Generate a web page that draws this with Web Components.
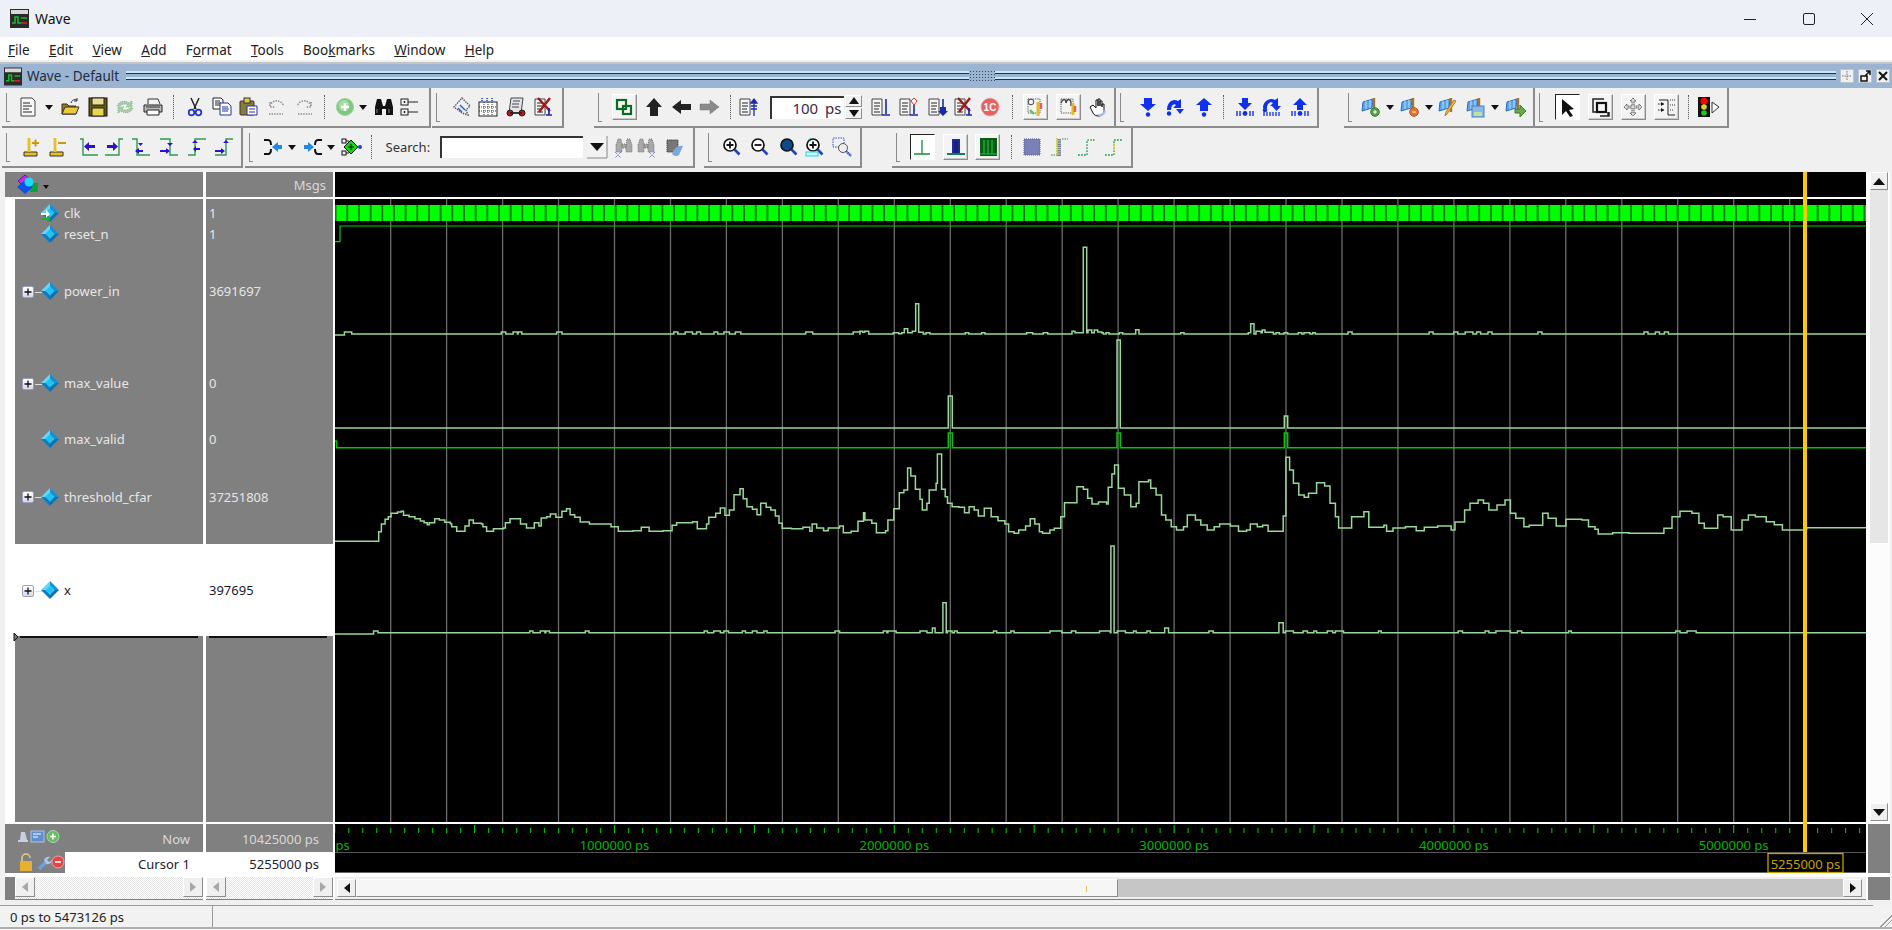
<!DOCTYPE html>
<html>
<head>
<meta charset="utf-8">
<title>Wave</title>
<style>
  html, body { margin: 0; height: 100%; overflow: hidden; background: #f0f0f0; }
  body { font: 13px "Noto Sans", "Liberation Sans", sans-serif; color: #111; }
</style>
</head>
<body>
<wave-app></wave-app>

<template id="app-tpl">
  <style>
    :host { display: block; width: 1892px; height: 930px; overflow: hidden; background: #f0f0f0; }
  </style>
  <title-bar></title-bar>
  <menu-bar>
    <menu-item><u>F</u>ile</menu-item>
    <menu-item><u>E</u>dit</menu-item>
    <menu-item><u>V</u>iew</menu-item>
    <menu-item><u>A</u>dd</menu-item>
    <menu-item>F<u>o</u>rmat</menu-item>
    <menu-item><u>T</u>ools</menu-item>
    <menu-item>Boo<u>k</u>marks</menu-item>
    <menu-item><u>W</u>indow</menu-item>
    <menu-item><u>H</u>elp</menu-item>
  </menu-bar>
  <dock-title></dock-title>
  <tool-strip>
    <tool-group left="2" right="431">
      <tool-icon name="doc" at="29"></tool-icon><tool-icon name="drop" at="49" w="8"></tool-icon>
      <tool-icon name="open" at="69.5"></tool-icon><tool-icon name="save" at="97.5"></tool-icon>
      <tool-icon name="reload" at="125"></tool-icon><tool-icon name="print" at="152.5"></tool-icon>
      <tool-sep at="173.5"></tool-sep><tool-icon name="cut" at="194.5"></tool-icon>
      <tool-icon name="copy" at="222"></tool-icon><tool-icon name="paste" at="249"></tool-icon>
      <tool-icon name="undo" at="277"></tool-icon><tool-icon name="redo" at="304"></tool-icon>
      <tool-sep at="324.5"></tool-sep><tool-icon name="plus" at="344.5"></tool-icon>
      <tool-icon name="drop" at="363" w="8"></tool-icon><tool-icon name="binoc" at="383.5"></tool-icon>
      <tool-icon name="tree" at="410"></tool-icon>
    </tool-group>
    <tool-group left="432" right="564">
      <tool-icon name="dia" at="462"></tool-icon><tool-icon name="table" at="488"></tool-icon>
      <tool-icon name="scroll" at="516"></tool-icon><tool-icon name="docx" at="544"></tool-icon>
    </tool-group>
    <tool-group left="594" right="1116">
      <tool-icon name="link" at="624" w="25" kind="raised"></tool-icon>
      <tool-icon name="up" at="654"></tool-icon><tool-icon name="left" at="681.5"></tool-icon>
      <tool-icon name="right" at="708.5"></tool-icon><tool-sep at="730"></tool-sep>
      <tool-icon name="docup" at="748.5"></tool-icon>
      <tool-field at="806.5" w="74" h="23" align="right" size="15">100 ps</tool-field>
      <tool-spin at="853.5"></tool-spin>
      <tool-icon name="docdn" at="881"></tool-icon><tool-icon name="docdia" at="909"></tool-icon>
      <tool-icon name="docdn2" at="937.5"></tool-icon><tool-icon name="docx" at="963.5"></tool-icon>
      <tool-icon name="redc" at="990"></tool-icon><tool-sep at="1012.5"></tool-sep>
      <tool-icon name="prop1" at="1035" w="25" kind="raised"></tool-icon>
      <tool-icon name="prop2" at="1068" w="25" kind="raised"></tool-icon>
      <tool-icon name="hand" at="1097"></tool-icon>
    </tool-group>
    <tool-group left="1116" right="1319">
      <tool-icon name="stepin" at="1148"></tool-icon><tool-icon name="stepover" at="1174.5"></tool-icon>
      <tool-icon name="stepout" at="1203.5"></tool-icon><tool-sep at="1223"></tool-sep>
      <tool-icon name="barin" at="1245"></tool-icon><tool-icon name="barover" at="1271.5"></tool-icon>
      <tool-icon name="barout" at="1300"></tool-icon>
    </tool-group>
    <tool-group left="1344" right="1535">
      <tool-icon name="flagadd" at="1372"></tool-icon><tool-icon name="drop" at="1390" w="8"></tool-icon>
      <tool-icon name="flagdel" at="1410.5"></tool-icon><tool-icon name="drop" at="1428.5" w="8"></tool-icon>
      <tool-icon name="flagedit" at="1449"></tool-icon><tool-icon name="flagsave" at="1477"></tool-icon>
      <tool-icon name="drop" at="1495" w="8"></tool-icon><tool-icon name="flaggo" at="1515.5"></tool-icon>
    </tool-group>
    <tool-group left="1535" right="1729">
      <tool-icon name="pointer" at="1567" w="25" kind="sunken"></tool-icon>
      <tool-icon name="zoomrect" at="1600.5" w="25" kind="raised"></tool-icon>
      <tool-icon name="pan" at="1633" w="25" kind="raised"></tool-icon>
      <tool-icon name="edit" at="1666" w="25" kind="raised"></tool-icon>
      <tool-sep at="1688.5"></tool-sep>
      <tool-icon name="light" at="1704"></tool-icon><tool-icon name="tri" at="1716" w="8"></tool-icon>
    </tool-group>
  </tool-strip>
  <tool-strip>
    <tool-group left="2" right="243">
      <tool-icon name="curadd" at="30"></tool-icon><tool-icon name="curdel" at="58"></tool-icon>
      <tool-icon name="edgel" at="88.5"></tool-icon><tool-icon name="edger" at="113.5"></tool-icon>
      <tool-icon name="edgedl" at="140.5"></tool-icon><tool-icon name="edgedr" at="168.5"></tool-icon>
      <tool-icon name="edgeul" at="197"></tool-icon><tool-icon name="edgeur" at="224"></tool-icon>
    </tool-group>
    <tool-group left="245" right="695">
      <tool-icon name="mergel" at="273"></tool-icon><tool-icon name="drop" at="292" w="8"></tool-icon>
      <tool-icon name="merger" at="312.5"></tool-icon><tool-icon name="drop" at="330.5" w="8"></tool-icon>
      <tool-icon name="node" at="350.5"></tool-icon><tool-sep at="371.5"></tool-sep>
      <tool-label at="408.5" w="46">Search:</tool-label>
      <tool-field at="511" w="143" h="22"></tool-field>
      <tool-icon name="combo" at="597" w="20"></tool-icon>
      <tool-icon name="findl" at="624"></tool-icon><tool-icon name="findr" at="646"></tool-icon>
      <tool-icon name="findopt" at="674"></tool-icon>
    </tool-group>
    <tool-group left="704" right="862">
      <tool-icon name="zin" at="732"></tool-icon><tool-icon name="zout" at="759.5"></tool-icon>
      <tool-icon name="zfull" at="789"></tool-icon><tool-icon name="zcur" at="815"></tool-icon>
      <tool-icon name="zrect" at="842"></tool-icon>
    </tool-group>
    <tool-group left="892" right="1133">
      <tool-icon name="wlit" at="922" w="25" kind="sunken"></tool-icon>
      <tool-icon name="wmid" at="955.5" w="25" kind="raised"></tool-icon>
      <tool-icon name="wfull" at="987.5" w="25" kind="raised"></tool-icon>
      <tool-sep at="1011"></tool-sep>
      <tool-icon name="dith1" at="1032"></tool-icon><tool-icon name="dith2" at="1060"></tool-icon>
      <tool-icon name="dith3" at="1087"></tool-icon><tool-icon name="dith4" at="1113.5"></tool-icon>
    </tool-group>
  </tool-strip>
  <wave-pane></wave-pane>
  <status-bar>0 ps to 5473126 ps</status-bar>
</template>

<script>
// small helpers for the icon table
const docBase = '<path d="M2 1h11l3 3v15H2z" fill="#f6f6f6" stroke="#444"/><path d="M4 6h7M4 9h9M4 12h6M4 15h9" stroke="#222" fill="none"/>';
const smallDoc = '<path d="M1 2h10v16H1z" fill="#f6f6f6" stroke="#444"/><path d="M3 6h6M3 9h6M3 12h5M3 15h6" stroke="#222" fill="none"/>';
const flagBase = '<path d="M1 5l10-3-1 9-10 3z" fill="#5aa6e8" stroke="#2a6cb8"/><path d="M4 4v8M8 3v8" stroke="#bfe0ff"/><path d="M12 1v14" stroke="#a8742a" stroke-width="2.4"/>';
const mag = (inner, bg = "#fff") => `<circle cx="8" cy="8" r="6" fill="${bg}" stroke="#111" stroke-width="1.7"/><path d="M12.5 12.5l5 5" stroke="#2244bb" stroke-width="2.6"/>${inner}`;
const edge = (line, arrow) => `<path d="${line}" fill="none" stroke="#2e9a50" stroke-width="1.4"/><path d="${arrow}" fill="#3010d0"/>`;
const bars = '<path d="M2 14v5M5 14v5M15 14v5M18 14v5" stroke="#1030f0" stroke-width="1.4"/><circle cx="10" cy="16.5" r="2.4" fill="#1030f0"/>';
const binoc = '<path d="M1 10l2-8h4l2 7h2l2-7h4l2 8v8h-7v-6H8v6H1z" fill="#111"/><path d="M3 12v4M15 12v4" stroke="#888"/>';
const binocFaded = '<path d="M2 8l2-6h3l1 6v7H2zM12 8l1-6h3l2 6v7h-6zM8 7h4v4H8z" fill="#a8a8a8" stroke="#777" stroke-dasharray="1 1"/>';
const dither = (d, c = "#7a8ab0") => `<path d="${d}" fill="none" stroke="${c}" stroke-dasharray="1.4 1.2" stroke-width="1.5"/>`;

const ICONS = {
  doc: docBase,
  drop: '<path d="M6 8h8l-4 5z" fill="#111"/>',
  open: '<path d="M2 7h5l2 2h7v8H2z" fill="#9a7a14" stroke="#333"/><path d="M2 17l3-7h14l-3 7z" fill="#ecc83c" stroke="#333"/><path d="M11 6c1-3 3-4 6-3M17 1v3h-3" fill="none" stroke="#333"/>',
  save: '<rect x="1" y="1" width="18" height="18" fill="#6a5a10" stroke="#111"/><rect x="4" y="1" width="12" height="7" fill="#eadf90" stroke="#222"/><rect x="4" y="11" width="12" height="8" fill="#e8d850" stroke="#222"/>',
  reload: '<path d="M2 9c2-5 8-6 12-3l3-2v6h-6l2-2c-3-2-6-1-8 1zM18 11c-2 5-8 6-12 3l-3 2v-6h6l-2 2c3 2 6 1 8-1z" fill="#a8d0a8" stroke="#8ab48a" stroke-dasharray="1.2 1"/>',
  print: '<path d="M5 7V2h10l2 5" fill="#f4f4f4" stroke="#333"/><path d="M1 8h18v7H1z" fill="#bbb" stroke="#222"/><path d="M4 13h12v5H4z" fill="#fff" stroke="#222"/><path d="M3 10h14" stroke="#333"/>',
  cut: '<path d="M6 1l5 11M14 1l-5 11" stroke="#222" stroke-width="1.5"/><circle cx="6.5" cy="15.5" r="2.8" fill="none" stroke="#2233cc" stroke-width="1.7"/><circle cx="13.5" cy="15.5" r="2.8" fill="none" stroke="#2233cc" stroke-width="1.7"/>',
  copy: '<path d="M1 1h8l2 2v9H1z" fill="#fff" stroke="#223"/><path d="M3 4h5M3 6h6M3 8h5" stroke="#223"/><path d="M8 6h8l3 3v9H8z" fill="#fff" stroke="#223399"/><path d="M10 10h6M10 12h7M10 14h6" stroke="#223399"/>',
  paste: '<rect x="1" y="4" width="14" height="14" rx="1" fill="#8a7a3a" stroke="#333"/><rect x="5" y="1" width="6" height="5" fill="#e6c84a" stroke="#333"/><path d="M8 9h10v9H8z" fill="#fff" stroke="#223399"/><path d="M10 12h6M10 15h6" stroke="#223399"/>',
  undo: dither("M3 9C4 4 11 2 15 6l2 3M3 5v5h5M2 17h14", "#888"),
  redo: dither("M17 9C16 4 9 2 5 6L3 9M17 5v5h-5M4 17h14", "#888"),
  plus: '<circle cx="10" cy="10" r="8.5" fill="#7cc87c" stroke="#a0cfa0"/><circle cx="9" cy="8.5" r="5.5" fill="#a4dda4"/><path d="M10 6v8M6 10h8" stroke="#fff" stroke-width="2.4"/>',
  binoc,
  tree: '<rect x="1" y="2" width="7" height="6" fill="#f4f4f4" stroke="#222"/><rect x="1" y="12" width="7" height="6" fill="#f4f4f4" stroke="#222"/><path d="M8 5h10M8 15h10M4.5 4v2M3.5 5h2M4.5 14v2M3.5 15h2" stroke="#222"/>',
  dia: '<path d="M10 1l8 8-4 4 2 5-6-2-8-6z" fill="none" stroke="#556" stroke-dasharray="1.4 1" stroke-width="1.4"/><path d="M8 8l5 5M6 11l4 4" stroke="#3060d0" stroke-width="1.5"/>',
  table: '<rect x="1" y="5" width="18" height="14" fill="#fff" stroke="#222"/><path d="M1 10h18M1 14h18M6 5v14M10 5v14M14 5v14" stroke="#333" stroke-dasharray="1 1"/><path d="M4 1v4M9 1v4M14 1v4" stroke="#2244dd" stroke-width="1.6" stroke-dasharray="1 1"/>',
  scroll: '<path d="M5 1h12l-2 15H3z" fill="#e4e4e4" stroke="#445"/><path d="M7 4h7M6 7h7M6 10h7" stroke="#445"/><circle cx="4" cy="16" r="3" fill="#b81820" stroke="#222"/><circle cx="16" cy="16" r="3" fill="#b81820" stroke="#222"/><path d="M4 16h12" stroke="#222" stroke-width="1.6"/>',
  docx: smallDoc + '<path d="M4 1l12 13M16 1L5 15" stroke="#a01818" stroke-width="2.4"/><path d="M15 11v7M12 18h6" stroke="#1a2aa8" stroke-width="1.7"/>',
  link: '<rect x="3" y="3" width="9" height="9" fill="none" stroke="#0c6a20" stroke-width="2.2"/><rect x="9" y="9" width="8" height="8" fill="none" stroke="#0c6a20" stroke-width="2.2"/>',
  up: '<path d="M10 1l8 9h-4v9H6v-9H2z" fill="#222"/>',
  left: '<path d="M0 10l9-7v4h10v6H9v4z" fill="#222"/>',
  right: '<path d="M20 10l-9-7v4H1v6h10v4z" fill="#8a8a8a" stroke="#777" stroke-dasharray="1 1"/>',
  docup: smallDoc + '<path d="M15 19V3M12 6l3-4 3 4zM12 9h6M12 12h6" fill="#1a2aa8" stroke="#1a2aa8" stroke-width="1.3"/>',
  docdn: smallDoc + '<path d="M15 2v15M11 18h8" stroke="#1a2aa8" stroke-width="1.6"/>',
  docdia: smallDoc + '<path d="M15 8v9M11 18h8" stroke="#1a2aa8" stroke-width="1.6"/><path d="M15 1l3 3-3 4-3-4z" fill="#fff" stroke="#e03030"/>',
  docdn2: smallDoc + '<path d="M15 2v8" stroke="#1a2aa8" stroke-width="1.6"/><path d="M12 10h6v4h2l-5 5-5-5h2z" fill="#1a2aa8"/>',
  redc: '<circle cx="10" cy="10" r="8.8" fill="#e86060" stroke="#e88" stroke-dasharray="1 1"/><text x="10" y="14" font-size="10" font-weight="700" text-anchor="middle" fill="#fff" font-family="Liberation Sans">1C</text>',
  prop1: '<path d="M3 2h12v14H3z" fill="none" stroke="#555" stroke-dasharray="1.3 1"/><circle cx="6" cy="5" r="2.8" fill="none" stroke="#444"/><path d="M13 5v14" stroke="#e0c020" stroke-width="3"/><path d="M16 6v6" stroke="#e06060" stroke-width="2.4"/><path d="M5 13l4 4" stroke="#60c060" stroke-width="2.4"/>',
  prop2: '<path d="M3 2h12v14H3z" fill="none" stroke="#555" stroke-dasharray="1.3 1"/><path d="M3 6c2-5 5-4 5 0M8 6c1-5 5-4 5 0v3" fill="none" stroke="#444" stroke-width="1.4"/><path d="M15 6v12" stroke="#e0c020" stroke-width="3"/><path d="M17 9v6" stroke="#e06060" stroke-width="2.4"/>',
  hand: '<path d="M3 10l3 6c1 2 3 3 6 3s5-2 5-5V7l-2 0v3V4h-2v5V2h-2v7V3H9v8L6 8z" fill="#fff" stroke="#111" stroke-linejoin="round"/><path d="M9 17c3 1 7 0 8-4l2 1c-1 4-4 6-7 5z" fill="#9fc0e8"/>',
  stepin: '<path d="M6 1h8v6h4l-8 7-8-7h4z" fill="#1030f0"/><circle cx="10" cy="17.5" r="2.2" fill="#1030f0"/>',
  stepover: '<path d="M2 13C2 5 8 1 13 4l3-2v9h-8l3-3C9 6 6 8 6 13z" fill="#1030f0"/><path d="M11 12h8l-4 5z" fill="#1030f0"/><circle cx="4" cy="16.5" r="2.2" fill="#1030f0"/>',
  stepout: '<path d="M10 1l8 7h-4v6H6V8H2z" fill="#1030f0"/><circle cx="10" cy="17.5" r="2.2" fill="#1030f0"/>',
  barin: '<path d="M7 1h6v5h4l-7 7-7-7h4z" fill="#1030f0"/>' + bars,
  barover: '<path d="M1 11C1 4 8 0 13 3l3-2v8H8l3-3C8 4 5 7 5 11z" fill="#1030f0"/><path d="M10 9h9l-4.500 5z" fill="#1030f0"/><path d="M2 15v4M5 15v4M8 15v4M11 15v4M14 15v4M17 15v4" stroke="#1030f0" stroke-width="1.3"/><circle cx="3" cy="13" r="2.300" fill="#1030f0"/>',
  barout: '<path d="M10 1l7 7h-4v5H7V8H3z" fill="#1030f0"/>' + bars,
  flagadd: flagBase + '<circle cx="13" cy="15" r="4.300" fill="#58a048" stroke="#3a7a30"/><path d="M13 13v4M11 15h4" stroke="#fff"/>',
  flagdel: flagBase + '<circle cx="13" cy="15" r="4.300" fill="#e8742a" stroke="#b8501a"/><path d="M11 15h4" stroke="#fff"/>',
  flagedit: flagBase + '<path d="M17 4L8 17l-2 2 1-4 8-12z" fill="#f0b840" stroke="#b88020"/>',
  flagsave: flagBase + '<rect x="5" y="9" width="12" height="11" fill="#8ab8e8" stroke="#4a80c0"/><rect x="7" y="15" width="8" height="4" fill="#bfe0a0"/>',
  flaggo: flagBase + '<path d="M9 12h5V8l6 6-6 6v-4H9z" fill="#6aa84a" stroke="#3a7a30"/>',
  pointer: '<path d="M5 2l12 10-5 1 4 6-3 1-4-6-4 4z" fill="#111"/>',
  zoomrect: '<path d="M2 4v-2h11M2 4v11h3" fill="none" stroke="#222" stroke-width="1.5"/><rect x="6" y="6" width="9" height="9" fill="none" stroke="#111" stroke-width="2.2"/><path d="M17 15v4H9M14 19h4v-4" fill="none" stroke="#222" stroke-width="1.5"/>',
  pan: '<path d="M10 1l3 3h-2v5h5V7l3 3-3 3v-2h-5v5h2l-3 3-3-3h2v-5H4v2l-3-3 3-3v2h5V4H7z" fill="#ddd" stroke="#555" stroke-dasharray="1.5 .7"/>',
  edit: '<path d="M3 3h9v15h7" fill="none" stroke="#222"/><path d="M14 3h5M14 8h5M14 13h4" stroke="#333" stroke-dasharray="1 1"/><path d="M2 7h6M2 13h6" stroke="#222" stroke-dasharray="1.500 1"/><path d="M5 5l3 2-3 2zM5 11l3 2-3 2z" fill="#111"/>',
  light: '<rect x="4" y="0" width="12" height="20" fill="#111"/><circle cx="10" cy="4" r="3.600" fill="#f00"/><circle cx="10" cy="10" r="2.800" fill="#d8d820"/><circle cx="10" cy="16" r="2.800" fill="#28c028"/>',
  tri: '<path d="M6 5l7 5-7 6z" fill="#fff" stroke="#333"/>',
  curadd: '<path d="M4 15h13v4H4z" fill="#e8c020" stroke="#333"/><path d="M9 1v14" stroke="#e8c020" stroke-width="2.800"/><path d="M12 6h7M15.500 2.500v7" stroke="#c89818" stroke-width="2"/>',
  curdel: '<path d="M2 15h13v4H2z" fill="#e8c020" stroke="#333"/><path d="M7 1v14" stroke="#e8c020" stroke-width="2.800"/><path d="M10 6h8" stroke="#c89818" stroke-width="2"/>',
  edgel: edge("M1 2h3v16h15", "M16 6v2H10V5L5 9.500l5 4.500v-3h6v-3z"),
  edger: edge("M1 18h14V2h4", "M3 8h6V5l5 4.500-5 4.500v-3H3z"),
  edgedl: edge("M1 2h5v16h13", "M12 13H8v-2l-4 3 4 3v-2h4zM7 6h5l-2.500 3z"),
  edgedr: edge("M1 2h10v16h8", "M1 13h6v-2l4 3-4 3v-2H1zM8 6h6l-3 3z"),
  edgeul: edge("M1 18h7V2h11", "M13 11H9V9l-3 3 3 3v-2h4zM5 6l3-3 3 3z"),
  edgeur: edge("M1 18h11V2h7", "M1 13h6v-2l4 3-4 3v-2H1zM9 6l3-3 3 3z"),
  mergel: '<path d="M1 3h4c3 0 3 3 3 5M1 17h4c3 0 3-3 3-5" fill="none" stroke="#111" stroke-width="2"/><path d="M9 10l6-5v3h4v4h-4v3z" fill="#2088e8"/>',
  merger: '<path d="M19 3h-4c-3 0-3 3-3 5M19 17h-4c-3 0-3-3-3-5" fill="none" stroke="#111" stroke-width="2"/><path d="M11 10L5 5v3H1v4h4v3z" fill="#2088e8"/>',
  node: '<rect x="1" y="2" width="4" height="4" fill="none" stroke="#111"/><rect x="1" y="14" width="4" height="4" fill="none" stroke="#111"/><path d="M5 4h3l3 3M5 16h3l3-3" stroke="#111" fill="none"/><path d="M10 3l7 7-7 7-7-7z" fill="#10d810" stroke="#111"/><path d="M10 7v6M7 10h6" stroke="#111"/><circle cx="19" cy="10" r="2" fill="#2040e0"/>',
  combo: '<rect x="0" y="-1" width="20" height="22" fill="#f2f2f2"/><path d="M20 -1v22H0" fill="none" stroke="#888"/><path d="M3 6h14l-7 8z" fill="#111"/>',
  findl: binocFaded + '<path d="M1 15l3 3-3 3M7 15l-3 3 3 3" stroke="#4060e0" fill="none" stroke-dasharray="1 1"/>',
  findr: binocFaded + '<path d="M13 15l3 3-3 3M19 15l-3 3 3 3" stroke="#4060e0" fill="none" stroke-dasharray="1 1"/>',
  findopt: '<path d="M3 3h11v12H3z" fill="#777" stroke="#444" stroke-dasharray="1.400 .7"/><path d="M8 17c2-6 6-9 11-8l-4 9c-2 2-5 1-7-1z" fill="#7ca8e0"/>',
  zin: mag('<path d="M8 4.500v7M4.500 8h7" stroke="#111" stroke-width="1.800"/>'),
  zout: mag('<path d="M4.500 8h7" stroke="#111" stroke-width="1.800"/>'),
  zfull: mag('', '#0d4a88'),
  zcur: mag('<path d="M8 4.500v7M4.500 8h7" stroke="#111" stroke-width="1.800"/><rect x="1" y="15" width="12" height="4" fill="#bff" stroke="#38c8e0"/><path d="M3 3l3-2" stroke="#38c8e0"/>'),
  zrect: '<path d="M1 1h11v9H1z" fill="none" stroke="#3050c0" stroke-dasharray="1.500 1"/><circle cx="11" cy="11" r="4.500" fill="#eee" stroke="#555"/><path d="M14 14l5 5" stroke="#3050c0" stroke-width="2.400" stroke-dasharray="1.500 .6"/>',
  wlit: '<path d="M10 3v14M2 17h16" stroke="#109038" stroke-width="1.300"/>',
  wmid: '<path d="M7 18V3h6v15M1 17h18" fill="none" stroke="#1c2c98" stroke-width="2"/><path d="M1 17h18" stroke="#10a040" stroke-width="1.400"/><rect x="8" y="4" width="4" height="12" fill="#182078"/>',
  wfull: '<rect x="2" y="1" width="17" height="18" fill="#0c5a18"/><path d="M6 3v14M10 3v14M14 3v14" stroke="#18c038" stroke-width="1.200"/><path d="M2 17h17" stroke="#18c038"/>',
  dith1: '<rect x="2" y="2" width="16" height="16" fill="#7a80b8" stroke="#4a5a90" stroke-dasharray="1 1"/>',
  dith2: '<path d="M7 1v17M1 18h6" stroke="#10a040" stroke-dasharray="1.500 1"/><path d="M9 2v17" stroke="#707890" stroke-width="4" stroke-dasharray="1.500 .7"/><path d="M7 1v17" stroke="#e8e040" stroke-width="1.200"/><path d="M12 2h6" stroke="#10a040" stroke-dasharray="1.500 1"/>',
  dith3: '<path d="M1 18h9V3h9" fill="none" stroke="#18a048" stroke-width="1.300" stroke-dasharray="1.800 1.200"/><path d="M10 3h4M13 3h5" stroke="#e8e080" stroke-dasharray="1 3"/>',
  dith4: '<path d="M1 18h9V3h9" fill="none" stroke="#18a048" stroke-width="1.300" stroke-dasharray="1.800 1.200"/><path d="M10 6v8" stroke="#e8d840" stroke-width="1.300"/>'
};

// diamond used in the signal list
const DIAMOND = `<svg width="18" height="18" viewBox="0 0 18 18"><path d="M9 0L0 9h4.500L9 4.500z" fill="#6ad4f4"/><path d="M9 0l9 9h-4.500L9 4.500z" fill="#0f92d8"/><path d="M0 9l9 9v-4.500L4.500 9z" fill="#0a7cc6"/><path d="M18 9l-9 9v-4.500L13.500 9z" fill="#0b6fb4"/><path d="M9 4.500L13.500 9 9 13.500 4.500 9z" fill="#1cc4f4"/></svg>`;
const WIN_ICON = `<svg width="100%" height="100%" viewBox="0 0 19 19"><rect width="19" height="19" fill="#2a2a2a"/><rect x="1" y="1" width="17" height="4" fill="#d8d8d8"/><path d="M2 14h3V8h3v6h3" fill="none" stroke="#10c030" stroke-width="1.500"/><path d="M11 9h6" stroke="#10c030" stroke-width="1.500"/><path d="M11 14h6" stroke="#e02030" stroke-width="1.500"/></svg>`;

class WaveApp extends HTMLElement {
  constructor() {
    super();
    this.attachShadow({ mode: "open" });
    this.shadowRoot.appendChild(document.getElementById("app-tpl").content.cloneNode(true));
  }
}

class TitleBar extends HTMLElement {
  constructor() {
    super();
    this.attachShadow({ mode: "open" });
    this.shadowRoot.innerHTML = `
      <style>
        :host { display: flex; align-items: center; height: 37px; padding-right: 19px; box-sizing: border-box; background: #eef0f8; color: #111; font-size: 14px; }
        .ico { width: 19px; height: 19px; margin-left: 10px; margin-right: 6px; }
        .name { flex: 1; }
        svg { display: block; }
        .ctl { margin-left: 46.500px; }
      </style>
      <div class="ico">${WIN_ICON}</div><div class="name">Wave</div>
      <div class="ctl"><svg width="12" height="12"><path d="M0 6.500h12" stroke="#222"/></svg></div>
      <div class="ctl"><svg width="12" height="12"><rect x=".5" y=".5" width="11" height="11" rx="1.500" fill="none" stroke="#222"/></svg></div>
      <div class="ctl"><svg width="12" height="12"><path d="M0 0l12 12M12 0L0 12" stroke="#222"/></svg></div>`;
  }
}

class MenuBar extends HTMLElement {
  constructor() {
    super();
    this.attachShadow({ mode: "open" });
    this.shadowRoot.innerHTML = `
      <style>
        :host { display: flex; align-items: center; height: 23px; padding: 2px 0 0 8px; box-sizing: border-box; gap: 19.300px; background: #fff; font-size: 13.500px; color: #222; }
      </style><slot></slot>`;
  }
}

class MenuItem extends HTMLElement {
  constructor() {
    super();
    this.attachShadow({ mode: "open" });
    this.shadowRoot.innerHTML = `<style>:host { display: block; }</style><slot></slot>`;
  }
}

class DockTitle extends HTMLElement {
  constructor() {
    super();
    this.attachShadow({ mode: "open" });
    this.shadowRoot.innerHTML = `
      <style>
        :host { display: flex; align-items: center; height: 26px; margin-top: 2px; box-sizing: border-box; border-top: 2px solid #c4c4c4; background: #9ab4d2; color: #1e2c40; font-size: 13.500px; }
        .ico { width: 18px; height: 19px; margin-left: 4px; margin-right: 5px; flex: none; }
        .txt { width: 99px; flex: none; white-space: nowrap; }
        .bar { flex: 1; height: 10px; position: relative; background:
          linear-gradient(#c4e8f6 0 2px, #243244 2px 3px, transparent 3px 6px, #c4e8f6 6px 8px, #243244 8px 9px, transparent 9px); }
        .grip { position: absolute; left: 843px; top: -1px; width: 26px; height: 12px; background:
          radial-gradient(#3a4a60 40%, transparent 45%) 0 0/3px 3px, #9ab4d2; }
        .btn { width: 14px; height: 14px; margin-left: 4px; background: #f0f0f0; border: 1px solid #b8c4d0; box-sizing: border-box; display: flex; align-items: center; justify-content: center; }
        .end { width: 2px; flex: none; }
      </style>
      <div class="ico">${WIN_ICON}</div><div class="txt">Wave - Default</div>
      <div class="bar"><div class="grip"></div></div>
      <div class="btn"><svg width="10" height="10"><path d="M5 0v10M0 5h10" stroke="#777" stroke-dasharray="1.500 1"/></svg></div>
      <div class="btn"><svg width="12" height="12"><path d="M2 6h6v5H2zM6 6l5-5M7 1h4v4" fill="none" stroke="#111" stroke-width="1.500"/></svg></div>
      <div class="btn"><svg width="10" height="10"><path d="M1 1l8 8M9 1L1 9" stroke="#111" stroke-width="2"/></svg></div>
      <div class="end"></div>`;
  }
}

class ToolStrip extends HTMLElement {
  constructor() {
    super();
    this.attachShadow({ mode: "open" });
    this.shadowRoot.innerHTML = `<style>:host { display: flex; height: 40px; }</style><slot></slot>`;
  }
  connectedCallback() {
    let prev = 0;
    for (const g of this.children) {
      g.style.marginLeft = (g.getAttribute("left") - prev) + "px";
      g.style.width = (g.getAttribute("right") - g.getAttribute("left")) + "px";
      prev = +g.getAttribute("right");
    }
  }
}

// a toolbar block: its children say where their middle sits with at="", w=""
class ToolGroup extends HTMLElement {
  constructor() {
    super();
    this.attachShadow({ mode: "open" });
    this.shadowRoot.innerHTML = `
      <style>
        :host { display: flex; align-items: center; box-sizing: border-box; height: 40px; position: relative; border-right: 2px solid #8c8c8c; border-bottom: 2px solid #8c8c8c; }
        .handle { position: absolute; left: 4px; top: 5px; bottom: 4px; width: 3px; border-left: 1.500px solid #8a8a8a; border-bottom: 1.500px solid #8a8a8a; }
      </style>
      <div class="handle"></div><slot></slot>`;
  }
  connectedCallback() {
    let prev = +this.getAttribute("left");
    for (const c of this.children) {
      const w = +(c.getAttribute("w") || (c.localName === "tool-sep" ? 1 : c.localName === "tool-spin" ? 17 : 20));
      const at = +c.getAttribute("at");
      c.style.width = w + "px";
      c.style.marginLeft = (at - w / 2 - prev) + "px";
      prev = at + w / 2;
    }
  }
}

class ToolIcon extends HTMLElement {
  constructor() {
    super();
    this.attachShadow({ mode: "open" });
  }
  connectedCallback() {
    this.shadowRoot.innerHTML = `
      <style>
        :host { display: flex; flex: none; align-items: center; justify-content: center; height: 26px; box-sizing: border-box; }
        :host([kind=raised]) { border: 1px solid; border-color: #fff #8c8c8c #8c8c8c #fff; box-shadow: inset -1px -1px 0 #c8c8c8; background: #f4f4f4; }
        :host([kind=sunken]) { border: 1px solid; border-color: #222 #fff #fff #222; background: #fff; }
        svg { flex: none; overflow: visible; }
      </style>
      <svg width="20" height="20" viewBox="0 0 20 20">${ICONS[this.getAttribute("name")] || ""}</svg>`;
  }
}

class ToolSep extends HTMLElement {
  constructor() {
    super();
    this.attachShadow({ mode: "open" });
    this.shadowRoot.innerHTML = `<style>:host { display: block; flex: none; height: 24px; border-left: 1px dotted #555; box-sizing: border-box; }</style>`;
  }
}

class ToolField extends HTMLElement {
  constructor() {
    super();
    this.attachShadow({ mode: "open" });
    const h = this.getAttribute("h") || 22;
    const size = this.getAttribute("size") || 13;
    const right = this.getAttribute("align") === "right";
    this.shadowRoot.innerHTML = `
      <style>
        :host { display: flex; flex: none; align-items: center; box-sizing: border-box; height: ${h}px; background: #fff; border-top: 2px solid #333; border-left: 2px solid #333; font-size: ${size}px; color: #3a2a44; padding-right: 2px; justify-content: ${right ? "flex-end" : "flex-start"}; word-spacing: 3px; }
      </style><slot></slot>`;
  }
}

class ToolLabel extends HTMLElement {
  constructor() {
    super();
    this.attachShadow({ mode: "open" });
    this.shadowRoot.innerHTML = `<style>:host { display: block; flex: none; color: #333; font-size: 13px; white-space: nowrap; }</style><slot></slot>`;
  }
}

class ToolSpin extends HTMLElement {
  constructor() {
    super();
    this.attachShadow({ mode: "open" });
    this.shadowRoot.innerHTML = `
      <style>
        :host { display: flex; flex-direction: column; flex: none; height: 24px; gap: 1px; }
        div { flex: 1; border: 1px solid; border-color: #fff #8c8c8c #8c8c8c #fff; display: flex; align-items: center; justify-content: center; }
      </style>
      <div><svg width="10" height="7"><path d="M5 0l5 7H0z" fill="#111"/></svg></div>
      <div><svg width="10" height="7"><path d="M5 7l5-7H0z" fill="#111"/></svg></div>`;
  }
}

class WavePane extends HTMLElement {
  constructor() {
    super();
    this.attachShadow({ mode: "open" });
    this.shadowRoot.innerHTML = `
      <style>
        :host { display: grid; position: relative; height: 728px; margin-top: 4px; margin-left: 5px; width: 1885px; background: #fff;
          grid-template-columns: 198px 3px 127px 2px 1531px 2px 22px;
          grid-template-rows: 25px 2px 623px 2px 28px 21px 4px 23px; }
        .head { grid-column: 1 / 4; grid-row: 1; display: grid; grid-template-columns: 198px 127px; column-gap: 3px; }
        .h { background: #808080; display: flex; align-items: center; color: #d8d8d8; }
        .msgs { justify-content: flex-end; padding-right: 7px; }
        .wtop { grid-column: 5; grid-row: 1; background: #000; }
        signal-list { grid-column: 1 / 4; grid-row: 3; }
        wave-plot { grid-column: 5; grid-row: 3; }
        cursor-panel { grid-column: 1 / 4; grid-row: 5 / 7; }
        time-axis { grid-column: 5; grid-row: 5 / 7; }
        .hs1 { grid-column: 1; grid-row: 8; margin-left: 10px; }
        .hs2 { grid-column: 3; grid-row: 8; }
        wave-scroll { grid-column: 5; grid-row: 8; }
        v-scroll { grid-column: 7; grid-row: 1 / 5; }
        .g1 { grid-column: 7; grid-row: 5 / 7; background: #808080; }
        .g2 { grid-column: 7; grid-row: 8; background: #808080; }
        .sw { grid-column: 1; grid-row: 8; width: 10px; background: #808080; }
        wave-cursor { position: absolute; left: 1798.300px; top: 0; width: 4px; height: 680px; background: #ffc800; }
      </style>
      <div class="head">
        <div class="h"><svg style="margin-left:12px" width="32" height="22" viewBox="0 0 32 22"><path d="M1 7l7-6 8 7-7 7z" fill="#c030e0" stroke="#701090"/><rect x="13" y="9" width="8" height="9" fill="#10a040"/><path d="M0 13l8-7 8 7-8 7z" fill="#1050e8"/><circle cx="12" cy="8" r="4.500" fill="#20d8f0"/><path d="M26 11h6l-3 4z" fill="#111"/></svg></div>
        <div class="h msgs">Msgs</div>
      </div>
      <div class="wtop"></div>
      <signal-list>
        <signal-row h="24" name="clk" value="1" clk></signal-row>
        <signal-row h="21" name="reset_n" value="1"></signal-row>
        <signal-row h="94" name="power_in" value="3691697" expand></signal-row>
        <signal-row h="90" name="max_value" value="0" expand></signal-row>
        <signal-row h="21" name="max_valid" value="0"></signal-row>
        <signal-row h="95" name="threshold_cfar" value="37251808" expand></signal-row>
        <signal-row h="92" name="x" value="397695" expand selected></signal-row>
      </signal-list>
      <wave-plot></wave-plot>
      <cursor-panel></cursor-panel>
      <time-axis></time-axis>
      <div class="sw"></div>
      <h-scroll class="hs1"></h-scroll>
      <h-scroll class="hs2"></h-scroll>
      <wave-scroll></wave-scroll>
      <v-scroll></v-scroll>
      <div class="g1"></div><div class="g2"></div>
      <wave-cursor></wave-cursor>`;
  }
}

class SignalList extends HTMLElement {
  constructor() {
    super();
    this.attachShadow({ mode: "open" });
    this.shadowRoot.innerHTML = `
      <style>
        :host { display: flex; flex-direction: column; background: #fff; }
        .fill { flex: 1; display: grid; grid-template-columns: 10px 188px 127px; }
        .fill .a { grid-column: 2; background: linear-gradient(#111, #111) no-repeat 5px 0 / 178px 2px, #808080; position: relative; }
        .fill .b { grid-column: 3; margin-left: 3px; width: 127px; background: linear-gradient(#111, #111) no-repeat 3px 0 / 118px 2px, #808080; }
        .mark { position: absolute; left: -2px; top: -4px; }
      </style>
      <slot></slot>
      <div class="fill"><i></i><div class="a"><svg class="mark" width="6" height="10"><path d="M1 1l4 4-4 4z" fill="#777" stroke="#111"/></svg></div><div class="b"></div></div>`;
  }
}

class SignalRow extends HTMLElement {
  constructor() {
    super();
    this.attachShadow({ mode: "open" });
  }
  connectedCallback() {
    const expand = this.hasAttribute("expand");
    const clk = this.hasAttribute("clk");
    this.shadowRoot.innerHTML = `
      <style>
        :host { display: grid; grid-template-columns: 10px 188px 3px 127px; height: ${this.getAttribute("h")}px; color: #e6e6e6; }
        .n, .v { background: #808080; display: flex; align-items: center; position: relative; }
        :host([selected]) .n, :host([selected]) .v { background: #fff; color: #1a1a2a; }
        .v { padding-left: 3px; grid-column: 4; }
        .n { grid-column: 2; padding-left: 26px; }
        :host([clk]) .n, :host([clk]) .v { padding-top: 3px; }
        .tx { margin-left: 5px; }
        .box { position: absolute; left: 7px; width: 10px; height: 10px; margin-top: 1px; border: 1px solid #9aa0c0; border-radius: 2px; background: linear-gradient(#fff, #d8d8e8); display: flex; align-items: center; justify-content: center; }
        .box::after { content: ""; position: absolute; left: 12px; top: 5px; width: 7px; height: 1px; background: #ddd; }
        .dia { position: relative; width: 18px; height: 18px; flex: none; }
        .arrow { position: absolute; left: 0; top: 6px; }
      </style>
      <div class="n">
        ${expand ? `<div class="box"><svg width="8" height="8"><path d="M4 .5v7M.5 4h7" stroke="#111" stroke-width="1.300"/></svg></div>` : ""}
        <div class="dia">${DIAMOND}${clk ? `<svg class="arrow" width="10" height="12"><path d="M0 3h5V0l4 4-4 4V5H0z" fill="#fff"/><path d="M0 8h6v-2l4 3-4 3v-2H0z" fill="#20b020"/></svg>` : ""}</div>
        <div class="tx">${this.getAttribute("name")}</div>
      </div>
      <div class="v">${this.getAttribute("value")}</div>`;
  }
}

// ---- waveform data, read from the picture ----
function steps(list, x0, kx, y0, ky) {
  return list.map(([x, y]) => `H${(x0 + x / kx).toFixed(1)}V${(y0 + y / ky).toFixed(1)}`).join("");
}
function bumps(list, x0, kx, base, top) {
  return list.map(([a, b, t]) => `H${(x0 + a / kx).toFixed(1)}V${t || top}H${(x0 + b / kx).toFixed(1)}V${base}`).join("");
}

const THRESH_L = [[106,395],[112,372],[120,358],[127,350],[133,340],[147,336],[155,334],[160,346],[172,350],[185,356],[197,363],[205,368],[212,374],[216,368],[228,356],[238,360],[250,367],[262,371],[265,380],[276,394],[288,394],[294,378],[303,360],[312,370],[330,372],[333,380],[341,394],[355,394],[356,386],[378,384],[382,368],[392,356],[408,356],[415,372],[428,384],[445,368],[455,378],[460,354],[472,350],[480,342],[492,352],[505,334],[515,326],[523,344],[533,352],[545,366],[565,372],[595,372],[612,380],[628,394],[660,392],[678,382],[695,394],[725,392],[745,376],[755,368],[790,365],[800,386],[820,372],[825,352],[840,340],[850,324],[860,346],[870,330],[880,284],[893,266],[900,296],[908,320],[920,328],[930,344],[938,310],[950,322],[960,330],[970,348],[978,370],[985,385],[1005,386],[1030,382],[1045,394],[1050,372],[1060,384],[1075,392],[1085,384],[1110,378],[1118,398],[1135,394],[1150,364],[1162,338],[1165,360],[1180,370],[1190,398],[1210,392],[1215,360],[1228,326],[1240,278],[1250,270],[1258,204],[1265,228],[1275,268],[1285,298],[1290,330],[1300,310],[1305,270],[1320,250],[1323,162],[1332,268],[1340,290],[1345,310],[1355,320],[1370,322],[1382,338],[1392,320],[1403,330],[1412,348],[1425,325],[1440,350],[1455,362],[1470,372],[1478,395],[1490,400],[1500,390],[1515,378],[1525,356],[1535,372],[1545,395],[1552,400],[1568,390]];
const THRESH_R = [[8,385],[20,350],[27,308],[40,308],[50,260],[62,268],[70,295],[78,312],[90,306],[105,312],[108,262],[115,222],[120,195],[127,265],[138,285],[150,320],[160,310],[165,245],[183,240],[187,265],[197,285],[207,345],[215,360],[225,380],[235,390],[248,380],[255,345],[270,360],[280,375],[292,390],[305,380],[315,372],[335,378],[350,394],[365,390],[372,372],[385,380],[395,376],[405,394],[425,394],[433,348],[438,172],[445,210],[452,250],[462,285],[472,292],[480,280],[495,248],[510,258],[520,310],[530,350],[536,384],[560,350],[575,350],[583,335],[592,382],[620,376],[625,394],[637,384],[660,380],[680,392],[695,382],[720,378],[745,390],[752,366],[770,330],[780,310],[795,300],[805,310],[815,330],[830,315],[845,300],[855,340],[865,355],[880,380],[890,376],[915,340],[925,355],[940,378],[958,358],[988,360],[1000,380],[1012,388],[1018,402],[1045,398],[1075,400],[1125,400],[1140,385],[1155,350],[1170,334],[1192,340],[1205,370],[1215,385],[1240,345],[1250,350],[1265,390],[1285,360],[1297,345],[1310,350],[1330,365],[1345,374],[1360,390],[1400,388],[1405,383]];
const POWER_MID = [[0,304],[8,307],[14,304],[26,312],[100,308],[116,311],[125,308],[133,296],[143,308],[157,304],[167,221],[176,307],[190,312],[198,308],[210,312],[316,308],[326,312],[365,308],[375,312],[500,308],[518,312],[550,308],[563,312],[636,304],[645,308],[670,52],[680,308],[684,300],[695,308],[703,300],[713,306],[725,308],[730,312],[738,308],[747,312],[778,308],[788,312],[827,299],[837,312],[962,308],[972,312],[1165,308],[1172,281],[1182,312],[1188,304],[1203,308],[1207,300],[1215,307],[1240,312],[1248,308],[1258,312],[1272,308],[1283,312],[1315,308],[1325,312],[1332,308],[1350,312],[1358,308],[1366,312]];
const POWER_L = [[497,510],[532,545],[547,558],[662,678],[1012,1024],[1046,1068],[1080,1092],[1132,1143],[1162,1178],[1196,1212],[1406,1427],[1548,1568]];
const POWER_R = [[24,36],[266,278],[340,352],[374,397],[408,420],[442,454],[591,603],[908,920],[942,954],[969,981]];
const X_L = [[435,442],[458,468],[470,478],[556,564],[815,822],[836,850],[858,868],[898,905],[920,930],[945,952],[1100,1110],[1205,1213],[1215,1233],[1285,1300],[1312,1318,628],[1335,1342,602.7],[1345,1355],[1360,1366],[1445,1452],[1483,1490]];
const X_R = [[0,22],[40,48],[92,112],[113,119,546],[125,140],[155,160],[180,186],[213,220,628],[295,303],[425,433,622.7],[437,452],[470,478],[490,495],[515,525],[530,545],[610,615],[758,766],[808,815],[828,855],[868,876],[963,968],[1162,1170],[1183,1200]];

class WavePlot extends HTMLElement {
  constructor() {
    super();
    this.attachShadow({ mode: "open" });
    let grid = "";
    for (let i = 1; i < 27; i++) grid += `M${(334.7 + i * 55.96).toFixed(1)} 199V822`;
    const pale = 'fill="none" stroke="#98d898" stroke-width="1.500"';
    const power = "M335 335H344.400V332H351.700V334" + bumps(POWER_L, 335, 2.987, 334, 332)
      + steps(POWER_MID, 860, 3, 230, 3) + bumps(POWER_R, 1340, 2.987, 334, 332) + "H1866";
    const maxValue = "M335 428H948.300V396H952.300V428H1117V340H1120.300V428H1284.300V416H1287.700V428H1866";
    const maxValid = "M335 441H336.500V447.700H948.300V433H952.300V447.700H1117V433H1120.300V447.700H1284.300V433H1287.700V447.700H1866";
    const thresh = "M335 541.300" + steps(THRESH_L, 330, 2.178, 400, 3) + steps(THRESH_R, 1050, 1.857, 400, 3) + "H1866";
    const x = "M335 634H373.600V631H378V632.700" + bumps(X_L, 330, 2.178, 632.7, 631) + bumps(X_R, 1050, 1.857, 632.7, 631) + "H1866";
    this.shadowRoot.innerHTML = `
      <style>:host { display: block; background: #000; overflow: hidden; } svg { display: block; }</style>
      <svg width="1531" height="623" viewBox="335 199 1531 623">
        <defs><pattern id="clk" x="336.500" y="0" width="11.670" height="30" patternUnits="userSpaceOnUse">
          <rect width="11.670" height="30" fill="#0a6a0a"/><rect width="10" height="30" fill="#00ff00"/>
        </pattern></defs>
        <path d="${grid}" stroke="#6c6c6c" stroke-width="1.300" fill="none"/>
        <rect x="335" y="205" width="1531" height="16" fill="url(#clk)"/>
        <path d="M335 241.700H340V226H1866" fill="none" stroke="#00d000" stroke-width="1.200"/>
        <path d="${power}" ${pale}/>
        <path d="${maxValue}" ${pale}/>
        <path d="${maxValid}" fill="none" stroke="#00c800" stroke-width="1.500"/>
        <path d="${thresh}" ${pale}/>
        <path d="${x}" ${pale}/>
      </svg>`;
  }
}

class CursorPanel extends HTMLElement {
  constructor() {
    super();
    this.attachShadow({ mode: "open" });
    this.shadowRoot.innerHTML = `
      <style>
        :host { display: grid; grid-template-columns: 198px 127px; grid-template-rows: 28px 21px; column-gap: 3px; color: #d8d8d8; background: #fff; }
        .c { background: #808080; display: flex; align-items: center; justify-content: flex-end; padding-right: 13px; position: relative; }
        .now { padding-top: 2px; box-sizing: border-box; }
        .cur { padding-top: 3px; box-sizing: border-box; }
        .v { padding-right: 14px; }
        .w { background: #fff; color: #1a2030; margin-left: 60px; }
        .lead { grid-column: 1; grid-row: 2; width: 60px; background: #808080; z-index: 1; display: flex; align-items: center; padding-left: 14px; box-sizing: border-box; }
        .ic { position: absolute; left: 11px; top: 5px; }
        .f { grid-column: 1; grid-row: 2; }
      </style>
      <div class="c now"><svg class="ic" width="46" height="16" viewBox="0 0 46 16"><path d="M2 11h10v2H2zM5 3h4l2 8H4z" fill="#c8d0e0"/><rect x="15" y="2" width="13" height="11" fill="#5e90d0" stroke="#a8c4e8"/><path d="M17 5h8M17 8h5" stroke="#fff"/><circle cx="37" cy="7.500" r="6" fill="#68bc68" stroke="#a8dca8"/><path d="M37 4.500v6M34 7.500h6" stroke="#fff" stroke-width="1.500"/></svg>Now</div>
      <div class="c v now">10425000 ps</div>
      <div class="lead"><svg width="46" height="20" viewBox="0 0 46 20"><path d="M3 8V5a4 4 0 0 1 8 0" fill="none" stroke="#e8d080" stroke-width="1.500"/><rect x="1" y="8" width="12" height="10" fill="#e8b030"/><path d="M20 16l7-7" stroke="#6ca0e0" stroke-width="3.500"/><path d="M25 7c1-3 4-4 6-3l-3 3 2 2 3-2c0 3-3 5-6 4z" fill="#a8c8f0"/><circle cx="39" cy="9" r="6" fill="#e04848" stroke="#f0a0a0"/><path d="M36 9h6" stroke="#fff" stroke-width="1.600"/></svg></div>
      <div class="c f w cur">Cursor 1</div>
      <div class="c v cur" style="background:#fff;color:#1a2030">5255000 ps</div>`;
  }
}

class TimeAxis extends HTMLElement {
  constructor() {
    super();
    this.attachShadow({ mode: "open" });
    let ticks = "", major = "", labels = "";
    for (let i = 0; i < 110; i++) {
      const x = (334.7 + i * 13.99).toFixed(1);
      if (i % 10 === 0) major += `M${x} 825V833`;
      else ticks += `M${x} 828V833`;
    }
    for (let i = 1; i < 6; i++) {
      labels += `<text x="${334.7 + i * 279.8}" y="850" text-anchor="middle">${i * 1000000} ps</text>`;
    }
    this.shadowRoot.innerHTML = `
      <style>
        :host { display: block; background: #000; overflow: hidden; }
        svg { display: block; font: 13px "Noto Sans", "Liberation Sans", sans-serif; }
      </style>
      <svg width="1531" height="49" viewBox="335 824 1531 49">
        <path d="${ticks}" stroke="#00b000" stroke-width="1.200"/>
        <path d="${major}" stroke="#00c000" stroke-width="1.200"/>
        <g fill="#00b800"><text x="335.500" y="850">ps</text>${labels}</g>
        <path d="M335 852.500H1866" stroke="#555"/>
        <path d="M335 872.500H1866" stroke="#666"/>
        <rect x="1768" y="853.500" width="75" height="19" fill="#000" stroke="#c8a000" stroke-width="1.300"/>
        <text x="1805.500" y="869" text-anchor="middle" fill="#c8a000">5255000 ps</text>
      </svg>`;
  }
}

class WaveCursor extends HTMLElement {
  constructor() {
    super();
    this.attachShadow({ mode: "open" });
    this.shadowRoot.innerHTML = `<style>:host { display: block; }</style>`;
  }
}

const SCROLL_BTN = `border: 1px solid; border-color: #fff #8c8c8c #8c8c8c #fff; background: #f0f0f0; display: flex; align-items: center; justify-content: center; box-sizing: border-box; flex: none;`;

class HScroll extends HTMLElement {
  constructor() {
    super();
    this.attachShadow({ mode: "open" });
    this.shadowRoot.innerHTML = `
      <style>
        :host { display: flex; background: repeating-conic-gradient(#fff 0 25%, #e4e4e4 0 50%) 0 0 / 2px 2px; height: 23px; box-sizing: border-box; padding-bottom: 2px; border-bottom: 1px solid #808080; }
        .b { width: 20px; ${SCROLL_BTN} }
        .t { flex: 1; }
      </style>
      <div class="b"><svg width="6" height="10"><path d="M6 0v10L0 5z" fill="#a8a8a8"/></svg></div>
      <div class="t"></div>
      <div class="b"><svg width="6" height="10"><path d="M0 0v10l6-5z" fill="#a8a8a8"/></svg></div>`;
  }
}

class WaveScroll extends HTMLElement {
  constructor() {
    super();
    this.attachShadow({ mode: "open" });
    this.shadowRoot.innerHTML = `
      <style>
        :host { display: flex; height: 23px; box-sizing: border-box; padding: 2px 4px 2px 2px; background: #f0f0f0; border-bottom: 1px solid #808080; position: relative; }
        .b { width: 19px; ${SCROLL_BTN} }
        .thumb { width: 762px; ${SCROLL_BTN} background: #f6f6f6; }
        .track { flex: 1; background: #c6c6c6; }
        .tick { position: absolute; left: 751px; top: 9px; width: 1px; height: 6px; background: #e0c040; }
      </style>
      <div class="b"><svg width="6" height="10"><path d="M6 0v10L0 5z" fill="#111"/></svg></div>
      <div class="thumb"></div><div class="track"></div>
      <div class="b"><svg width="6" height="10"><path d="M0 0v10l6-5z" fill="#111"/></svg></div>
      <div class="tick"></div>`;
  }
}

class VScroll extends HTMLElement {
  constructor() {
    super();
    this.attachShadow({ mode: "open" });
    this.shadowRoot.innerHTML = `
      <style>
        :host { display: flex; flex-direction: column; background: #fcfcfc; padding: 0 2px; box-sizing: border-box; position: relative; }
        .b { height: 18px; ${SCROLL_BTN} }
        .thumb { height: 353px; background: #e6e6e6; }
        .rest { flex: 1; }
        .foot { height: 3px; }
      </style>
      <div class="b"><svg width="12" height="7"><path d="M6 0l6 7H0z" fill="#111"/></svg></div>
      <div class="thumb"></div><div class="rest"></div>
      <div class="b"><svg width="12" height="7"><path d="M6 7l6-7H0z" fill="#111"/></svg></div>
      <div class="foot"></div>`;
  }
}

class StatusBar extends HTMLElement {
  constructor() {
    super();
    this.attachShadow({ mode: "open" });
    this.shadowRoot.innerHTML = `
      <style>
        :host { display: flex; align-items: stretch; height: 24px; margin-top: 5px; box-sizing: border-box; border-top: 1px solid #9a9a9a; border-bottom: 2px solid #b0b0b0; background: #f2f2f2; color: #222; font-size: 13px; }
        .a { width: 213px; padding-left: 10px; box-sizing: border-box; display: flex; align-items: center; border-right: 1px solid #9a9a9a; }
        .b { flex: 1; }
        .grip { width: 19px; border-top: 1px solid #f2f2f2; margin-top: -1px; background: linear-gradient(135deg, transparent 70%, #999 70% 73%, transparent 73% 82%, #999 82% 85%, transparent 85%); }
      </style>
      <div class="a"><slot></slot></div><div class="b"></div><div class="grip"></div>`;
  }
}

customElements.define("wave-app", WaveApp);
customElements.define("title-bar", TitleBar);
customElements.define("menu-bar", MenuBar);
customElements.define("menu-item", MenuItem);
customElements.define("dock-title", DockTitle);
customElements.define("tool-strip", ToolStrip);
customElements.define("tool-group", ToolGroup);
customElements.define("tool-icon", ToolIcon);
customElements.define("tool-sep", ToolSep);
customElements.define("tool-field", ToolField);
customElements.define("tool-label", ToolLabel);
customElements.define("tool-spin", ToolSpin);
customElements.define("wave-pane", WavePane);
customElements.define("signal-list", SignalList);
customElements.define("signal-row", SignalRow);
customElements.define("wave-plot", WavePlot);
customElements.define("cursor-panel", CursorPanel);
customElements.define("time-axis", TimeAxis);
customElements.define("wave-cursor", WaveCursor);
customElements.define("h-scroll", HScroll);
customElements.define("wave-scroll", WaveScroll);
customElements.define("v-scroll", VScroll);
customElements.define("status-bar", StatusBar);
</script>
</body>
</html>
